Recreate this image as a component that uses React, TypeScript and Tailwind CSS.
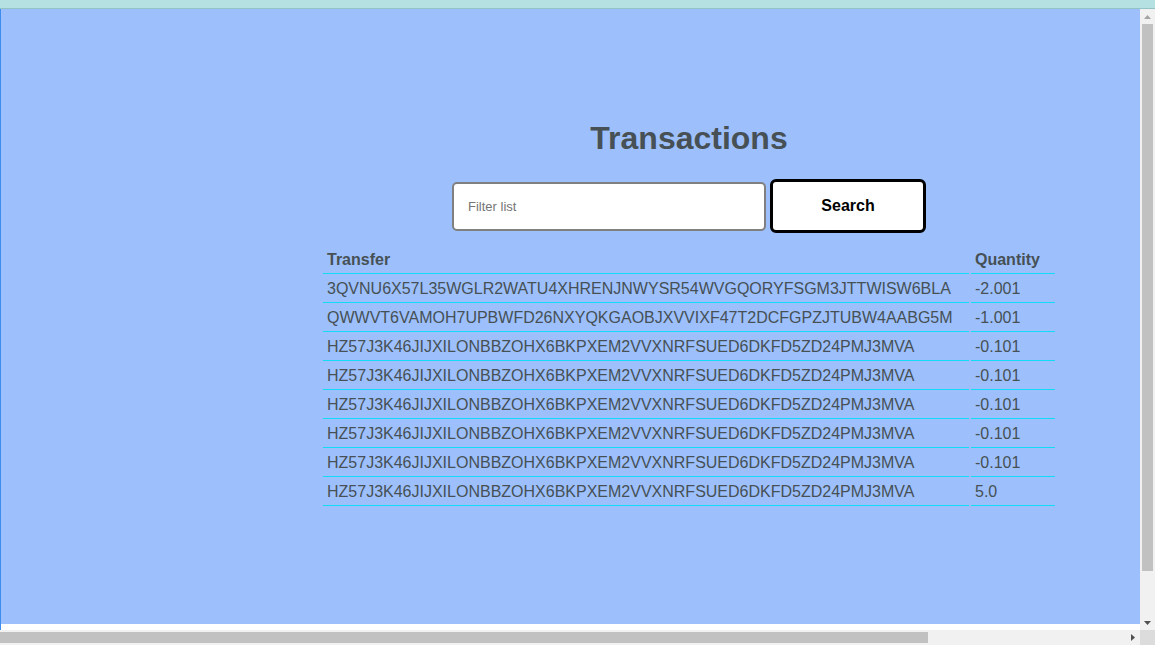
const rows = [
  { transfer: '3QVNU6X57L35WGLR2WATU4XHRENJNWYSR54WVGQORYFSGM3JTTWISW6BLA', quantity: '-2.001' },
  { transfer: 'QWWVT6VAMOH7UPBWFD26NXYQKGAOBJXVVIXF47T2DCFGPZJTUBW4AABG5M', quantity: '-1.001' },
  { transfer: 'HZ57J3K46JIJXILONBBZOHX6BKPXEM2VVXNRFSUED6DKFD5ZD24PMJ3MVA', quantity: '-0.101' },
  { transfer: 'HZ57J3K46JIJXILONBBZOHX6BKPXEM2VVXNRFSUED6DKFD5ZD24PMJ3MVA', quantity: '-0.101' },
  { transfer: 'HZ57J3K46JIJXILONBBZOHX6BKPXEM2VVXNRFSUED6DKFD5ZD24PMJ3MVA', quantity: '-0.101' },
  { transfer: 'HZ57J3K46JIJXILONBBZOHX6BKPXEM2VVXNRFSUED6DKFD5ZD24PMJ3MVA', quantity: '-0.101' },
  { transfer: 'HZ57J3K46JIJXILONBBZOHX6BKPXEM2VVXNRFSUED6DKFD5ZD24PMJ3MVA', quantity: '-0.101' },
  { transfer: 'HZ57J3K46JIJXILONBBZOHX6BKPXEM2VVXNRFSUED6DKFD5ZD24PMJ3MVA', quantity: '5.0' },
];

function TransactionTable() {
  return (
    <table className="w-[736px] border-separate border-spacing-[2px] text-[16px] leading-[18px] text-[#465055]">
      <thead>
        <tr>
          <th className="p-1 text-left font-bold border-b border-[#12dcf5]">Transfer</th>
          <th className="w-[84px] p-1 text-left font-bold border-b border-[#12dcf5]">Quantity</th>
        </tr>
      </thead>
      <tbody>
        {rows.map((row, i) => (
          <tr key={i}>
            <td className="p-1 border-b border-[#12dcf5]">{row.transfer}</td>
            <td className="p-1 border-b border-[#12dcf5]">{row.quantity}</td>
          </tr>
        ))}
      </tbody>
    </table>
  );
}

function Arrow({ dir, color }: { dir: 'up' | 'down' | 'right'; color: string }) {
  const points = {
    up: '0,4 3.5,0 7,4',
    down: '0,0 7,0 3.5,4',
    right: '0,0 4,3.5 0,7',
  }[dir];
  const w = dir === 'right' ? 4 : 7;
  const h = dir === 'right' ? 7 : 4;
  return (
    <svg width={w} height={h} viewBox={`0 0 ${w} ${h}`}>
      <polygon points={points} fill={color} />
    </svg>
  );
}

export default function App() {
  return (
    <div className="flex h-[645px] w-full flex-col overflow-hidden bg-white font-['Liberation_Sans',Arial,sans-serif]">
      {/* top strip */}
      <div className="h-[9px] shrink-0 bg-[#b5e1e3] border-b border-[#93c3c5]" />

      <div className="flex min-h-0 flex-1">
        {/* viewport */}
        <div className="relative min-w-0 flex-1 overflow-hidden">
          <div className="ml-[-15px] h-[672px] w-[1408px] bg-white">
            <div className="flex h-[615px] flex-col items-center bg-[#9dc0fc] pt-[111px]">
              <h1 className="text-[32px] font-bold leading-[36px] text-[#465055]">Transactions</h1>

              <div className="mt-[23px] flex items-center gap-1">
                <input
                  type="text"
                  placeholder="Filter list"
                  className="h-[49px] w-[314px] rounded-[5px] border-2 border-[#808080] bg-white px-[14px] text-[13px] text-black outline-none placeholder:text-[#757575]"
                />
                <button className="h-[54px] w-[156px] rounded-[6px] border-[3px] border-black bg-white text-[16px] font-bold text-black">
                  Search
                </button>
              </div>

              <div className="mt-[12px]">
                <TransactionTable />
              </div>
            </div>
          </div>
          {/* left edge line */}
          <div className="absolute inset-y-0 left-0 w-px bg-[#3d8df0]" />
        </div>

        {/* vertical scrollbar */}
        <div className="flex w-[15px] shrink-0 flex-col bg-[#f1f1f1]">
          <div className="flex h-[15px] items-center justify-center">
            <Arrow dir="up" color="#a3a3a3" />
          </div>
          <div className="flex-1 px-[2px]">
            <div className="h-[547px] bg-[#c1c1c1]" />
          </div>
          <div className="flex h-[15px] items-center justify-center">
            <Arrow dir="down" color="#505050" />
          </div>
        </div>
      </div>

      {/* horizontal scrollbar */}
      <div className="flex h-[15px] shrink-0">
        <div className="flex flex-1 bg-[#f1f1f1]">
          <div className="flex-1 py-[2px]">
            <div className="h-full w-[928px] bg-[#c1c1c1]" />
          </div>
          <div className="flex w-[15px] items-center justify-center">
            <Arrow dir="right" color="#505050" />
          </div>
        </div>
        <div className="w-[15px] bg-[#dcdcdc]" />
      </div>
    </div>
  );
}
